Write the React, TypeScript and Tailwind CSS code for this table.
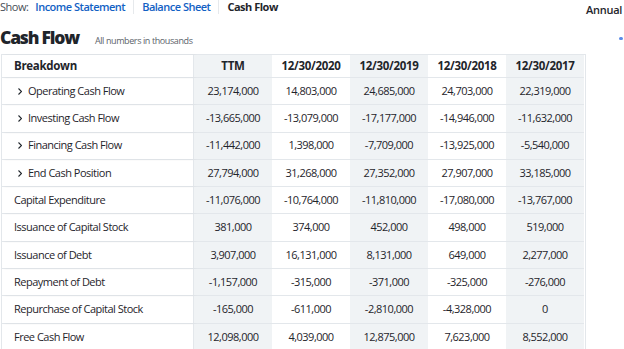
import React from 'react';

type Row = { label: string; expand?: boolean; values: string[] };

const columns = ['TTM', '12/30/2020', '12/30/2019', '12/30/2018', '12/30/2017'];

const rows: Row[] = [
  { label: 'Operating Cash Flow', expand: true, values: ['23,174,000', '14,803,000', '24,685,000', '24,703,000', '22,319,000'] },
  { label: 'Investing Cash Flow', expand: true, values: ['-13,665,000', '-13,079,000', '-17,177,000', '-14,946,000', '-11,632,000'] },
  { label: 'Financing Cash Flow', expand: true, values: ['-11,442,000', '1,398,000', '-7,709,000', '-13,925,000', '-5,540,000'] },
  { label: 'End Cash Position', expand: true, values: ['27,794,000', '31,268,000', '27,352,000', '27,907,000', '33,185,000'] },
  { label: 'Capital Expenditure', values: ['-11,076,000', '-10,764,000', '-11,810,000', '-17,080,000', '-13,767,000'] },
  { label: 'Issuance of Capital Stock', values: ['381,000', '374,000', '452,000', '498,000', '519,000'] },
  { label: 'Issuance of Debt', values: ['3,907,000', '16,131,000', '8,131,000', '649,000', '2,277,000'] },
  { label: 'Repayment of Debt', values: ['-1,157,000', '-315,000', '-371,000', '-325,000', '-276,000'] },
  { label: 'Repurchase of Capital Stock', values: ['-165,000', '-611,000', '-2,810,000', '-4,328,000', '0'] },
  { label: 'Free Cash Flow', values: ['12,098,000', '4,039,000', '12,875,000', '7,623,000', '8,552,000'] },
];

// TTM, 2019 and 2017 columns carry the grey band
const shaded = [true, false, true, false, true];

function Cell({ children, i, head }: { children: React.ReactNode; i: number; head?: boolean }) {
  return (
    <div
      className={`flex items-center justify-center border-b border-[#e3e7eb] ${
        shaded[i] ? 'bg-[#f0f3f5]' : 'bg-white'
      } ${head ? 'font-bold text-[11.5px] tracking-[-0.3px]' : 'font-medium text-[11px] tracking-[-0.5px]'}`}
    >
      {children}
    </div>
  );
}

export default function App() {
  return (
    <div className="w-[624px] h-[349px] overflow-hidden bg-white text-[#1f252b] font-['Open_Sans',sans-serif]">
      {/* Show tabs */}
      <div className="flex items-start h-[16px] text-[11px] leading-[14px] tracking-[-0.5px]">
        <span className="text-[#464e56]">Show:</span>
        <span className="ml-[7px] text-[#1261c4] font-semibold">Income Statement</span>
        <span className="mx-[8px] w-px h-[14px] bg-[#e6e9ec]" />
        <span className="text-[#1261c4] font-semibold">Balance Sheet</span>
        <span className="mx-[8px] w-px h-[14px] bg-[#e6e9ec]" />
        <span className="font-bold">Cash Flow</span>
        <span className="ml-auto mr-[2px] mt-[3px] font-semibold tracking-[-0.3px]">Annual</span>
      </div>

      {/* Title */}
      <div className="flex items-end h-[38px] pb-[8px]">
        <h1 className="text-[17.5px] font-extrabold leading-none tracking-[-1.2px]">Cash Flow</h1>
        <span className="ml-[16px] text-[9px] leading-none text-[#5b636a] tracking-[-0.4px] mb-[1px]">
          All numbers in thousands
        </span>
        <span className="ml-auto mr-[1px] mb-[6px] w-[4px] h-[3px] bg-[#5b8be8] rounded-sm" />
      </div>

      {/* Table */}
      <div className="ml-[1px] w-[585px] border-t border-l border-r border-[#e3e7eb] grid grid-cols-[192px_78px_78px_78px_78px_78px] grid-rows-[23px] auto-rows-[27.3px]">
        <div className="flex items-center pl-[12px] font-bold text-[11.5px] tracking-[-0.3px] border-b border-r border-[#e3e7eb] shadow-[2px_0_2px_rgba(0,0,0,0.05)]">
          Breakdown
        </div>
        {columns.map((c, i) => (
          <Cell key={c} i={i} head>
            {c}
          </Cell>
        ))}
        {rows.map((r) => (
          <React.Fragment key={r.label}>
            <div className="flex items-center pl-[12px] font-medium text-[11px] tracking-[-0.5px] border-b border-r border-[#e3e7eb] shadow-[2px_0_2px_rgba(0,0,0,0.05)]">
              {r.expand && (
                <svg className="ml-[4px] mr-[6px] w-[4px] h-[7px]" viewBox="0 0 4 7" fill="none">
                  <path d="M0.5 0.5l3 3-3 3" stroke="#1f252b" strokeWidth="1.1" />
                </svg>
              )}
              {r.label}
            </div>
            {r.values.map((v, i) => (
              <Cell key={i} i={i}>
                {v}
              </Cell>
            ))}
          </React.Fragment>
        ))}
      </div>
    </div>
  );
}
